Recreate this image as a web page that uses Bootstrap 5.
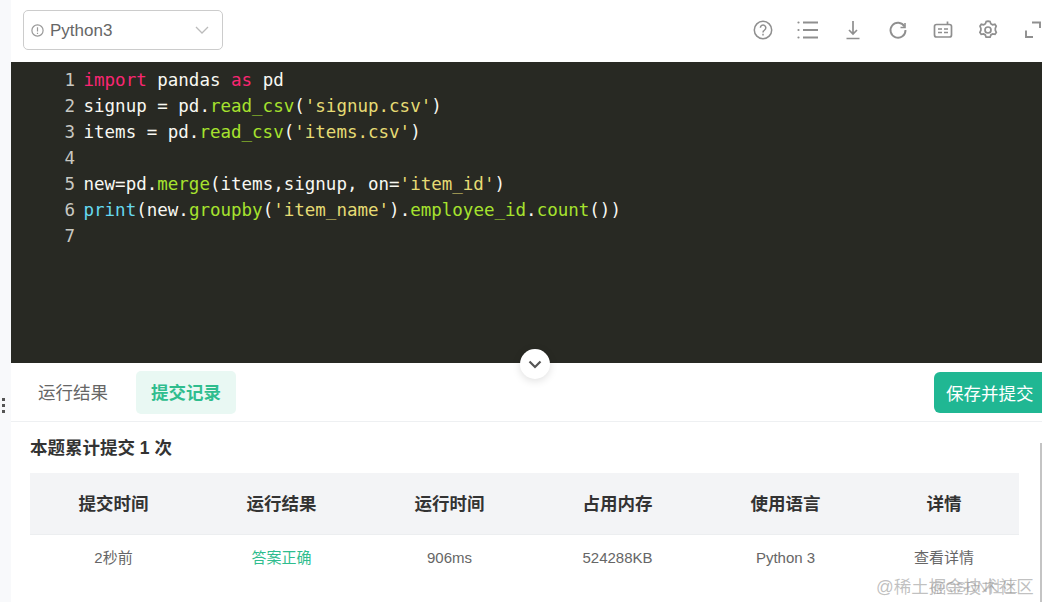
<!DOCTYPE html>
<html lang="zh">
<head>
<meta charset="utf-8">
<title>Python3</title>
<link href="https://cdn.jsdelivr.net/npm/bootstrap@5.3.0/dist/css/bootstrap.min.css" rel="stylesheet">
<style>
html,body{height:602px;overflow:hidden;background:#fff;}
body{font-family:"Liberation Sans","Noto Sans CJK SC",sans-serif;color:#555;}
.shell{height:602px;width:1042px;}
.rail{width:11px;flex:none;background:#f8f9fb;padding-top:398px;}
.rail i{display:block;width:3px;height:3px;margin:0 auto 3px 2px;background:#555;}
.pane{width:1031px;flex:none;overflow:hidden;position:relative;}
.tools{height:62px;padding:0 0 2px 12px;}
.langsel{width:200px;height:40px;border:1px solid #ccc;border-radius:5px;padding:0 13px 0 7px;font-size:17px;color:#666;}
.langname{margin-left:6px;padding-top:2px;}
.tool-icons{gap:0;margin-right:-3px;}
.tool-icons svg{width:24px;height:24px;margin-left:21px;display:block;}
.editor{height:301px;background:#282923;padding-top:5px;font-family:"DejaVu Sans Mono",monospace;font-size:17.5px;line-height:26px;color:#f8f8f2;}
.cl{display:flex;white-space:pre;height:26px;}
.ln{width:64px;text-align:right;color:#c8c8c2;margin-right:8.5px;flex:none;}
.kw{color:#f92672;}.fn{color:#a6e22e;}.st{color:#e6db74;}.bi{color:#66d9ef;}
.fold{position:absolute;left:509px;top:349px;width:30px;height:30px;background:#fff;border-radius:50%;box-shadow:0 2px 8px rgba(0,0,0,.13);}
.tabbar{height:59px;border-bottom:1px solid #eef0f2;padding:8px 0 0 12px;}
.tabx{height:43px;font-size:17.5px;line-height:45px;padding:0 15px;border-radius:5px;color:#666;}
.tabx.on{background:#e9f8f3;color:#2fbd8e;font-weight:700;margin-left:13px;}
.savebtn{position:absolute;left:923px;top:372px;width:120px;height:41px;line-height:44px;background:#20b793;color:#fff;border-radius:6px;font-size:17.5px;padding:0 0 0 12px;}
.records{padding:14px 0 0 19px;}
.rhead{font-size:17.5px;font-weight:700;color:#333;line-height:24px;margin-bottom:13px;}
.rtable{width:989px;table-layout:fixed;border-collapse:collapse;text-align:center;}
.rtable col.wide{width:168px;}
.rtable th{background:#f3f4f6;height:61px;font-size:17.5px;font-weight:700;color:#333;padding:2px 1px 0 0;}
.rtable td{height:46px;font-size:15px;color:#666;padding:1px 1px 0 0;border-top:1px solid #eceef0;}
.rtable td.okv{color:#2fbd8e;}
.sbar{position:absolute;left:1029px;top:443px;width:3px;height:160px;background:#c4c4c4;}
.wmark{position:absolute;left:865px;top:574px;font-size:17.5px;color:rgba(140,140,140,.55);white-space:nowrap;}
.wmark2{position:absolute;left:919px;top:576px;font-size:15px;color:rgba(140,140,140,.5);white-space:nowrap;}
</style>
</head>
<body>
<div class="shell d-flex">
  <div class="rail"><i></i><i></i><i></i></div>
  <div class="pane">
    <div class="tools d-flex align-items-center justify-content-between">
      <div class="langsel d-flex align-items-center">
        <svg width="13" height="13" viewBox="0 0 13 13" fill="none" stroke="#999" stroke-width="1.2" class="flex-none"><circle cx="6.5" cy="6.5" r="5.6"/><path d="M6.5 3.2v4.2M6.5 8.7v1.3"/></svg>
        <span class="langname flex-grow-1">Python3</span>
        <svg width="14" height="8" viewBox="0 0 14 8" fill="none" stroke="#bbb" stroke-width="1.3"><path d="M1 1l6 6 6-6"/></svg>
      </div>
      <div class="tool-icons d-flex align-items-center">
        <svg viewBox="0 0 24 24" fill="none" stroke="#8f8f8f" stroke-width="1.5"><circle cx="12" cy="12" r="8.7"/><path d="M9.4 9.8a2.7 2.7 0 1 1 4.2 2.2c-1 .7-1.6 1.2-1.6 2.4"/><path d="M12 15.800v1.600"/></svg>
        <svg viewBox="0 0 24 24" fill="none" stroke="#8f8f8f" stroke-width="1.8"><path d="M7 4.500h15M7 12h15M7 19.500h15"/><path d="M2.500 4.500h.01M2.500 12h.01M2.500 19.500h.01" stroke-linecap="round" stroke-width="2.200"/></svg>
        <svg viewBox="0 0 24 24" fill="none" stroke="#8f8f8f" stroke-width="1.7"><path d="M12 3v13M8 12l4 4 4-4M5.500 20.500h13"/></svg>
        <svg viewBox="0 0 24 24" fill="none" stroke="#8f8f8f" stroke-width="1.9"><path d="M18.500 8.500A7.500 7.500 0 1 0 19.500 12"/><path d="M19 5v4.500h-4.500" stroke-width="1.600"/></svg>
        <svg viewBox="0 0 24 24" fill="none" stroke="#8f8f8f" stroke-width="1.700"><rect x="3.500" y="6.500" width="17" height="12.500" rx="2"/><path d="M7 11h4M13 11h4M7 14.500h4M13 14.500h4M16.500 3.500v3"/></svg>
        <svg viewBox="0 0 24 24" fill="none" stroke="#8f8f8f" stroke-width="1.700"><path d="M12 3.200l2 .3.800 2.300 1.700 1 2.400-.5 1.300 1.800-.9 2.300v1.800l1 2.200-1.300 1.900-2.400-.4-1.700 1-.8 2.300h-4l-.8-2.300-1.700-1-2.400.4-1.300-1.900 1-2.200v-1.800l-.9-2.300 1.300-1.800 2.400.5 1.700-1 .8-2.300z"/><circle cx="12" cy="12" r="3"/></svg>
        <svg viewBox="0 0 24 24" fill="none" stroke="#8f8f8f" stroke-width="1.900"><path d="M11 4.500h8V10M5 12.500V19h7"/></svg>
      </div>
    </div>
    <div class="editor">
      <div class="cl"><span class="ln">1</span><span><span class="kw">import</span> pandas <span class="kw">as</span> pd</span></div>
      <div class="cl"><span class="ln">2</span><span>signup = pd.<span class="fn">read_csv</span>(<span class="st">'signup.csv'</span>)</span></div>
      <div class="cl"><span class="ln">3</span><span>items = pd.<span class="fn">read_csv</span>(<span class="st">'items.csv'</span>)</span></div>
      <div class="cl"><span class="ln">4</span><span></span></div>
      <div class="cl"><span class="ln">5</span><span>new=pd.<span class="fn">merge</span>(items,signup, on=<span class="st">'item_id'</span>)</span></div>
      <div class="cl"><span class="ln">6</span><span><span class="bi">print</span>(new.<span class="fn">groupby</span>(<span class="st">'item_name'</span>).<span class="fn">employee_id</span>.<span class="fn">count</span>())</span></div>
      <div class="cl"><span class="ln">7</span><span></span></div>
    </div>
    <div class="fold d-flex align-items-center justify-content-center">
      <svg width="14" height="9" viewBox="0 0 14 9" fill="none" stroke="#555" stroke-width="2.200"><path d="M1.500 1.500L7 7l5.500-5.500"/></svg>
    </div>
    <div class="tabbar d-flex">
      <div class="tabx">运行结果</div>
      <div class="tabx on">提交记录</div>
    </div>
    <div class="savebtn">保存并提交</div>
    <div class="records">
      <div class="rhead">本题累计提交 1 次</div>
      <table class="rtable">
        <colgroup><col class="wide"><col class="wide"><col class="wide"><col class="wide"><col class="wide"><col></colgroup>
        <thead><tr><th>提交时间</th><th>运行结果</th><th>运行时间</th><th>占用内存</th><th>使用语言</th><th>详情</th></tr></thead>
        <tbody><tr><td>2秒前</td><td class="okv">答案正确</td><td>906ms</td><td>524288KB</td><td>Python 3</td><td>查看详情</td></tr></tbody>
      </table>
    </div>
    <div class="sbar"></div>
    <div class="wmark">@稀土掘金技术社区</div>
    <div class="wmark2">@CSDN社区</div>
  </div>
</div>
<script src="https://cdn.jsdelivr.net/npm/bootstrap@5.3.0/dist/js/bootstrap.bundle.min.js"></script>
</body>
</html>
